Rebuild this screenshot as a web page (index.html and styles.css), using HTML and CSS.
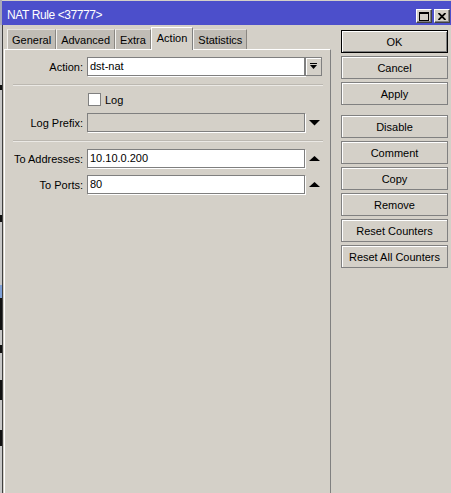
FILE: index.html
```html
<!DOCTYPE html>
<html>
<head>
<meta charset="utf-8">
<title>NAT Rule</title>
<link rel="stylesheet" href="styles.css">
</head>
<body>
<div class="screen">
  <div class="backdrop"></div>
  <div class="window">
    <div class="titlebar">
      <span class="title">NAT Rule &lt;37777&gt;</span>
      <div class="tb-buttons">
        <span class="tb-btn"><svg width="10" height="9" viewBox="0 0 10 9"><rect x="0.5" y="0.5" width="9" height="8" fill="none" stroke="#000"/><rect x="0" y="0" width="10" height="2" fill="#000"/></svg></span>
        <span class="tb-btn"><svg width="8" height="7" viewBox="0 0 8 7"><path d="M0.5 0 L7.5 7 M7.5 0 L0.5 7" stroke="#000" stroke-width="1.8"/></svg></span>
      </div>
    </div>
    <div class="body">
      <div class="main">
        <div class="tabs">
          <span class="tab">General</span>
          <span class="tab">Advanced</span>
          <span class="tab">Extra</span>
          <span class="tab active">Action</span>
          <span class="tab">Statistics</span>
        </div>
        <div class="panel">
          <div class="row">
            <span class="lbl">Action:</span>
            <span class="field">dst-nat</span>
            <span class="dd-btn"><svg width="7" height="7" viewBox="0 0 7 7"><rect x="0" y="0" width="7" height="1" fill="#000"/><polygon points="0,2 7,2 3.5,6" fill="#000"/></svg></span>
          </div>
          <div class="sep"></div>
          <div class="row check-row">
            <span class="lbl"></span>
            <span class="checkbox"></span>
            <span class="check-text">Log</span>
          </div>
          <div class="row">
            <span class="lbl">Log Prefix:</span>
            <span class="field disabled"></span>
            <span class="arrow"><svg width="11" height="6" viewBox="0 0 11 6"><polygon points="0,0 11,0 5.5,5.5" fill="#000"/></svg></span>
          </div>
          <div class="sep"></div>
          <div class="row">
            <span class="lbl">To Addresses:</span>
            <span class="field">10.10.0.200</span>
            <span class="arrow"><svg width="11" height="6" viewBox="0 0 11 6"><polygon points="0,5 11,5 5.5,0" fill="#000"/></svg></span>
          </div>
          <div class="row">
            <span class="lbl">To Ports:</span>
            <span class="field">80</span>
            <span class="arrow"><svg width="11" height="6" viewBox="0 0 11 6"><polygon points="0,5 11,5 5.5,0" fill="#000"/></svg></span>
          </div>
        </div>
      </div>
      <div class="side">
        <span class="btn default">OK</span>
        <span class="btn">Cancel</span>
        <span class="btn">Apply</span>
        <span class="btn group-start">Disable</span>
        <span class="btn">Comment</span>
        <span class="btn">Copy</span>
        <span class="btn">Remove</span>
        <span class="btn">Reset Counters</span>
        <span class="btn">Reset All Counters</span>
      </div>
    </div>
  </div>
</div>
</body>
</html>
```
FILE: styles.css
```css
html, body {
  margin: 0;
  padding: 0;
  background: #d4d0c8;
  overflow: hidden;
}

.screen {
  display: flex;
  width: 451px;
  height: 493px;
  font-family: "Liberation Sans", Arial, sans-serif;
  font-size: 11px;
  color: #000;
}

.backdrop {
  width: 2px;
  flex: none;
  background: linear-gradient(to bottom,
    #a8a8b8 0 25px,
    #c8c8c8 25px 85px,
    #111 85px 90px,
    #c8c8c8 90px 215px,
    #111 215px 222px,
    #c8c8c8 222px 285px,
    #7ea0d8 285px 298px,
    #111 298px 330px,
    #c8c8c8 330px 345px,
    #111 345px 353px,
    #c8c8c8 353px 380px,
    #111 380px 400px,
    #c8c8c8 400px 430px,
    #111 430px 446px,
    #c8c8c8 446px 493px);
}

.window {
  width: 449px;
  display: flex;
  flex-direction: column;
}

.titlebar {
  height: 24px;
  border-top: 1px solid #d4d0c8;
  background: #4c4fcb;
  display: flex;
  padding: 0 1px 0 5px;
}

.title {
  color: #fff;
  font-size: 12px;
  line-height: 14px;
  padding-top: 7px;
  letter-spacing: -0.4px;
}

.tb-buttons {
  margin-left: auto;
  display: flex;
  gap: 2px;
  align-self: flex-end;
  margin-bottom: 2px;
}

.tb-btn {
  box-sizing: border-box;
  width: 16px;
  height: 14px;
  background: #d4d0c8;
  border-top: 1px solid #fff;
  border-left: 1px solid #fff;
  border-right: 1px solid #404040;
  border-bottom: 1px solid #404040;
  box-shadow: inset -1px -1px 0 #808080;
  display: flex;
  align-items: center;
  justify-content: center;
}

.body {
  flex: 1;
  display: flex;
  border-left: 1px solid #404040;
  background: #d4d0c8;
}

.main {
  margin-left: 1px;
  width: 327px;
  display: flex;
  flex-direction: column;
}

.tabs {
  height: 24px;
  display: flex;
  align-items: flex-end;
  padding-left: 3px;
}

.tab {
  box-sizing: border-box;
  height: 20px;
  padding: 1px 4px 0;
  background: #c0bcb5;
  border-top: 1px solid #e4e2dd;
  border-left: 1px solid #f4f3f0;
  border-right: 1px solid #8a8782;
  line-height: 19px;
}

.tab.active {
  height: 23px;
  margin-bottom: -1px;
  background: #d4d0c8;
  border-top: 1px solid #fff;
  border-left: 1px solid #fff;
  border-right: 1px solid #808080;
  line-height: 20px;
  padding: 0 5px;
  position: relative;
  z-index: 1;
}

.panel {
  flex: 1;
  border-top: 1px solid #fff;
  border-left: 1px solid #fff;
  border-right: 1px solid #808080;
  display: flex;
  flex-direction: column;
  gap: 7px;
  padding-top: 7px;
}

.row {
  height: 19px;
  display: flex;
  align-items: center;
}

.check-row {
  height: 13px;
}

.lbl {
  width: 78px;
  flex: none;
  text-align: right;
  margin-right: 4px;
  white-space: nowrap;
}

.field {
  box-sizing: border-box;
  width: 218px;
  height: 19px;
  flex: none;
  background: #fff;
  border: 1px solid #7f7f7f;
  box-shadow: 1px 1px 0 #fff;
  padding-left: 2px;
  line-height: 17px;
}

.field.disabled {
  background: #d4d0c8;
}

.dd-btn {
  box-sizing: border-box;
  width: 17px;
  height: 19px;
  background: #d4d0c8;
  border: 1px solid #808080;
  box-shadow: inset 1px 1px 0 #fff;
  display: flex;
  align-items: center;
  justify-content: center;
}

.arrow {
  margin-left: 4px;
  display: flex;
  align-items: center;
}

.checkbox {
  box-sizing: border-box;
  width: 13px;
  height: 13px;
  background: #fff;
  border: 1px solid #808080;
  margin-left: 1px;
}

.check-text {
  margin-left: 4px;
}

.sep {
  margin: 1px 7px 0 8px;
  height: 0;
  border-top: 1px solid #bcb8b1;
  border-bottom: 1px solid #ebe9e5;
}

.side {
  margin-left: 10px;
  width: 107px;
  padding-top: 5px;
  display: flex;
  flex-direction: column;
  gap: 3px;
}

.btn {
  box-sizing: border-box;
  height: 23px;
  border: 1px solid #808080;
  box-shadow: inset 1px 1px 0 #fff;
  display: flex;
  align-items: center;
  justify-content: center;
  white-space: nowrap;
}

.btn.default {
  border-color: #000;
  box-shadow: inset 1px 1px 0 #fff, inset -1px -1px 0 #808080;
}

.btn.group-start {
  margin-top: 7px;
}
```
